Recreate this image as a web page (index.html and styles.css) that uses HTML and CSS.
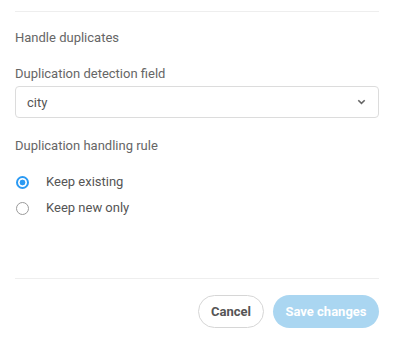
FILE: index.html
```html
<!DOCTYPE html>
<html>
    <head>
        <meta charset="utf-8">
        <title>Handle duplicates</title>
        <link rel="stylesheet" href="styles.css">
    </head>
    <body>
        <main class="painel">
            <section class="secao">
                <h2 class="titulo">Handle duplicates</h2>

                <label class="rotulo" for="campo">Duplication detection field</label>
                <div class="seletor" id="campo">
                    <span>city</span>
                    <svg width="9" height="6" viewBox="0 0 9 6">
                        <path d="M1.3 1.2 L4.5 4.3 L7.7 1.2" fill="none" stroke="#666" stroke-width="1.6" />
                    </svg>
                </div>

                <p class="rotulo regra">Duplication handling rule</p>

                <div class="opcoes">
                    <label class="opcao">
                        <span class="radio marcado"></span>
                        Keep existing
                    </label>
                    <label class="opcao">
                        <span class="radio"></span>
                        Keep new only
                    </label>
                </div>
            </section>

            <footer class="rodape">
                <button class="botao cancelar">Cancel</button>
                <button class="botao salvar" disabled>Save changes</button>
            </footer>
        </main>
    </body>
</html>
```

FILE: styles.css
```css
body {
    margin: 0;
    background-color: white;
    font-family: Roboto, "Liberation Sans", sans-serif;
    color: #666666;
}

.painel {
    width: 364px;
    margin-left: 15px;
}

.secao {
    margin-top: 11px;
    border-top: 1px solid #eeeeee;
    padding-top: 18px;
    height: 248px;
}

.titulo {
    margin: 0;
    font-size: 13px;
    font-weight: normal;
    line-height: 16px;
}

.rotulo {
    display: block;
    margin: 20px 0 4px 0;
    font-size: 13px;
    line-height: 16px;
}

.seletor {
    display: flex;
    justify-content: space-between;
    align-items: center;
    height: 30px;
    padding: 0 12px 0 11px;
    border: 1px solid #dcdcdc;
    border-radius: 4px;
    font-size: 13px;
    color: #555555;
}

.regra {
    margin-top: 20px;
    margin-bottom: 0;
}

.opcoes {
    display: flex;
    flex-direction: column;
    gap: 10px;
    margin-top: 20px;
}

.opcao {
    display: flex;
    align-items: center;
    gap: 17px;
    font-size: 13px;
    line-height: 16px;
    color: #555555;
}

.radio {
    box-sizing: border-box;
    width: 13px;
    height: 13px;
    margin-left: 1px;
    border: 1.5px solid #9a9a9a;
    border-radius: 50%;
}

.radio.marcado {
    border: 2px solid #2b9af3;
    background: radial-gradient(circle, #2b9af3 0 2.6px, white 3.2px);
}

.rodape {
    display: flex;
    justify-content: flex-end;
    gap: 9px;
    border-top: 1px solid #eeeeee;
    padding-top: 16px;
}

.botao {
    height: 33px;
    border-radius: 17px;
    font-family: Roboto, "Liberation Sans", sans-serif;
    font-size: 13px;
    font-weight: bold;
}

.cancelar {
    width: 66px;
    background-color: white;
    border: 1px solid #d6d6d6;
    color: #555555;
}

.salvar {
    width: 106px;
    background-color: #aad6f1;
    border: none;
    color: white;
}
```
